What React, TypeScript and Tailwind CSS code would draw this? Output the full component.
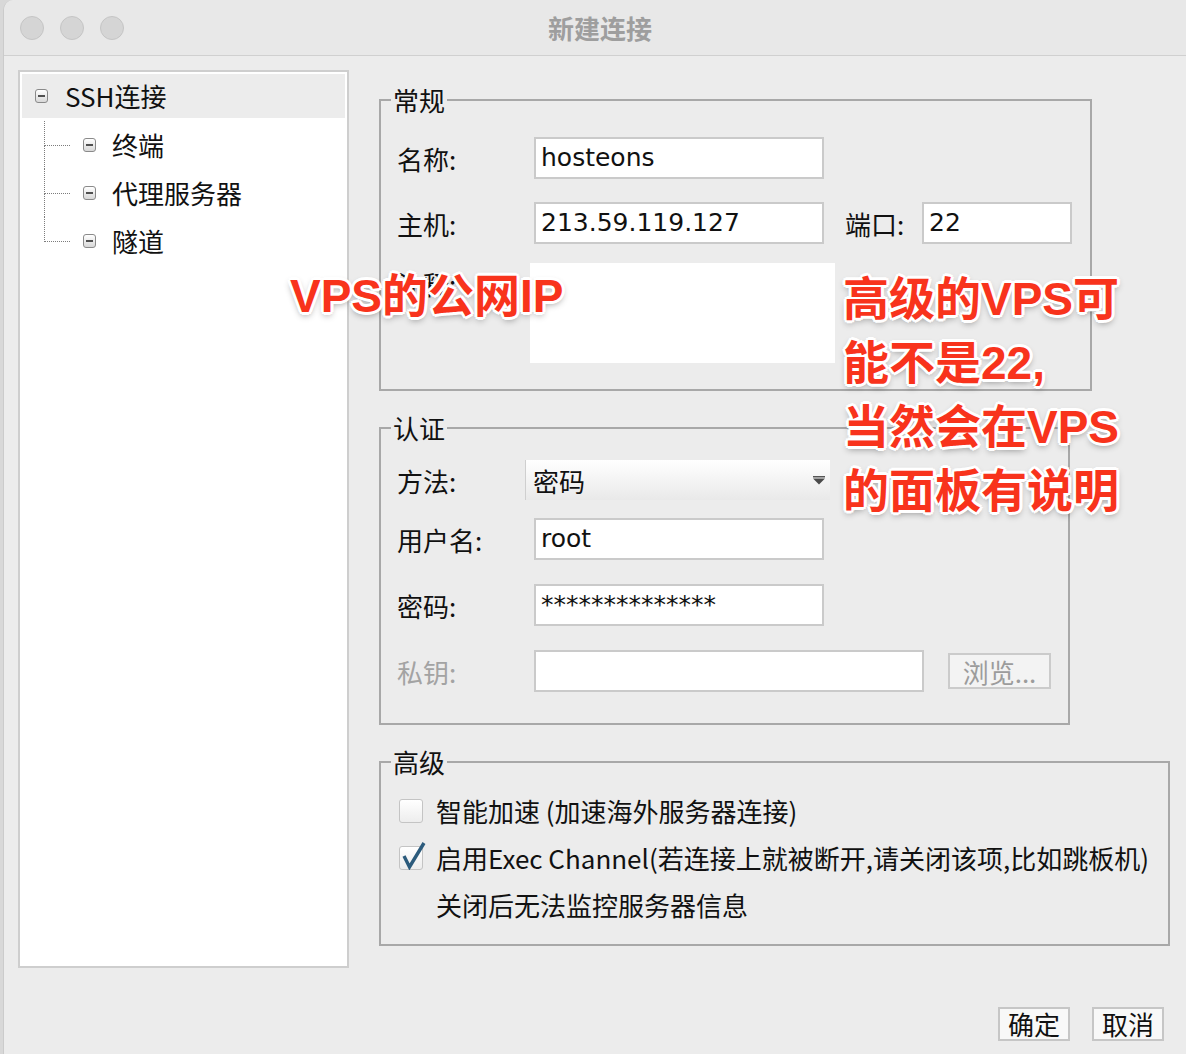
import type { ReactNode } from "react";

function MinusBox() {
  return (
    <div className="w-[13px] h-[14px] rounded-[3px] border-[1.5px] border-[#8a8a8a] bg-gradient-to-b from-white to-[#d8d8d8] flex items-center justify-center shrink-0">
      <div className="w-[7px] h-[1.5px] bg-[#505050]" />
    </div>
  );
}

function TreeChild({ label, last }: { label: string; last?: boolean }) {
  return (
    <div className="h-[48px] flex items-center pl-[22px]">
      <div className="w-[26px] h-full flex flex-col">
        <div className="flex-1 border-l border-b border-dotted border-[#7c7c7c]" />
        <div className={last ? "flex-1" : "flex-1 border-l border-dotted border-[#7c7c7c]"} />
      </div>
      <div className="ml-[13px]">
        <MinusBox />
      </div>
      <span className="ml-[16px] text-[26px] leading-[30px] text-[#111]">{label}</span>
    </div>
  );
}

function TextBox({ value, w }: { value?: string; w: string }) {
  return (
    <div
      className={`${w} h-[42px] bg-white border-2 border-[#cacaca] px-[5px] flex items-center font-['DejaVu_Sans','Noto_Sans_CJK_SC',sans-serif] text-[25px] text-[#111]`}
    >
      {value}
    </div>
  );
}

function Group({ title, w, className, children }: { title: string; w: string; className?: string; children: ReactNode }) {
  return (
    <fieldset className={`${w} border-2 border-[#a8a8a8] pl-[10px] ${className ?? ""}`}>
      <legend className="px-[2px] text-[26px] leading-[30px] text-[#111]">{title}</legend>
      {children}
    </fieldset>
  );
}

function Check({ on }: { on?: boolean }) {
  return (
    <div className="relative w-[24px] h-[24px] ml-[2px] rounded-[3px] border border-[#c4c4c4] bg-gradient-to-b from-white to-[#ededed] shrink-0">
      {on && (
        <svg className="absolute left-[1px] top-[-6px]" width="26" height="29" viewBox="0 0 26 29">
          <path d="M3 15 L8.5 26 L23 2" fill="none" stroke="#2c5b7c" strokeWidth="3.4" strokeLinejoin="miter" />
        </svg>
      )}
    </div>
  );
}

const shadow =
  "[text-shadow:3px_0_#fff,-3px_0_#fff,0_3px_#fff,0_-3px_#fff,2px_2px_#fff,-2px_-2px_#fff,2px_-2px_#fff,-2px_2px_#fff,0_3px_7px_rgba(0,0,0,0.45)]";

export default function App() {
  return (
    <div className="relative w-[1186px] h-[1054px] overflow-hidden bg-[#d8d8d8] font-['Noto_Sans_CJK_SC',sans-serif]">
      <div className="ml-[3px] h-full bg-[#ececec] rounded-tl-[10px] border-l border-[#cbcbcb] flex flex-col">
        {/* title bar */}
        <div className="h-[56px] shrink-0 bg-[#e8e8e8] rounded-tl-[10px] border-b border-[#d0d0d0] flex items-center pl-[16px]">
          <div className="flex gap-[16px]">
            <div className="w-[24px] h-[24px] rounded-full bg-[#d5d5d5] border border-[#c5c5c5]" />
            <div className="w-[24px] h-[24px] rounded-full bg-[#d5d5d5] border border-[#c5c5c5]" />
            <div className="w-[24px] h-[24px] rounded-full bg-[#d5d5d5] border border-[#c5c5c5]" />
          </div>
          <span className="ml-[424px] text-[26px] font-bold text-[#9e9e9e]">新建连接</span>
        </div>

        <div className="flex flex-1 items-start">
          {/* tree */}
          <div className="ml-[14px] mt-[14px] w-[331px] h-[898px] shrink-0 bg-white border-2 border-[#cecece] p-[2px]">
            <div className="h-[44px] bg-[#ececec] flex items-center pl-[13px]">
              <MinusBox />
              <span className="ml-[17px] text-[26px] leading-[30px] text-[#111]">SSH连接</span>
            </div>
            <div className="mt-[3px]">
              <TreeChild label="终端" />
              <TreeChild label="代理服务器" />
              <TreeChild label="隧道" last />
            </div>
          </div>

          {/* form */}
          <div className="ml-[30px] pt-[29px] flex-1 flex flex-col">
            <Group title="常规" w="w-[713px]" className="pt-[22px] pb-[26px]">
              <div className="ml-[6px] flex flex-col">
                <div className="flex items-center">
                  <span className="w-[137px] text-[26px] text-[#111]">名称:</span>
                  <TextBox w="w-[290px]" value="hosteons" />
                </div>
                <div className="mt-[23px] flex items-center">
                  <span className="w-[137px] text-[26px] text-[#111]">主机:</span>
                  <TextBox w="w-[290px]" value="213.59.119.127" />
                  <span className="ml-[21px] w-[77px] text-[26px] text-[#111]">端口:</span>
                  <TextBox w="w-[150px]" value="22" />
                </div>
                <div className="mt-[19px] flex items-start">
                  <span className="w-[133px] mt-[6px] text-[26px] leading-[30px] text-[#111]">注释:</span>
                  <div className="w-[305px] h-[100px] bg-white" />
                </div>
              </div>
            </Group>

            <Group title="认证" w="w-[691px]" className="mt-[22px] pt-[17px] pb-[31px]">
              <div className="ml-[6px] flex flex-col">
                <div className="flex items-center">
                  <span className="w-[128px] text-[26px] text-[#111]">方法:</span>
                  <div className="w-[305px] h-[40px] bg-gradient-to-b from-white to-[#e9e9e9] border-l border-[#cfcfcf] flex items-center pl-[7px] pr-[4px]">
                    <span className="text-[26px] text-[#111]">密码</span>
                    <svg className="ml-auto" width="14" height="9" viewBox="0 0 14 9">
                      <rect x="1" y="0" width="12" height="1.5" fill="#555" />
                      <path d="M1 2.5 L13 2.5 L7 8.5 Z" fill="#4a4a4a" />
                    </svg>
                  </div>
                </div>
                <div className="mt-[18px] flex items-center">
                  <span className="w-[137px] text-[26px] text-[#111]">用户名:</span>
                  <TextBox w="w-[290px]" value="root" />
                </div>
                <div className="mt-[24px] flex items-center">
                  <span className="w-[137px] text-[26px] text-[#111]">密码:</span>
                  <TextBox w="w-[290px]" value="**************" />
                </div>
                <div className="mt-[24px] flex items-center">
                  <span className="w-[137px] text-[26px] text-[#a3a3a3]">私钥:</span>
                  <TextBox w="w-[390px]" />
                  <div className="ml-[24px] w-[103px] h-[36px] bg-[#f3f3f3] border-2 border-[#cbcbcb] flex items-center justify-center text-[26px] text-[#9c9c9c]">
                    浏览...
                  </div>
                </div>
              </div>
            </Group>

            <Group title="高级" w="w-[791px]" className="mt-[22px] pt-[10px] pb-[16px]">
              <div className="ml-[6px] flex flex-col">
                <div className="h-[47px] flex items-center">
                  <Check />
                  <span className="ml-[13px] text-[26px] text-[#111]">智能加速 (加速海外服务器连接)</span>
                </div>
                <div className="h-[47px] flex items-center">
                  <Check on />
                  <span className="ml-[13px] text-[26px] text-[#111] whitespace-nowrap">
                    启用Exec Channel(若连接上就被断开,请关闭该项,比如跳板机)
                  </span>
                </div>
                <div className="h-[47px] flex items-center pl-[39px]">
                  <span className="text-[26px] text-[#111]">关闭后无法监控服务器信息</span>
                </div>
              </div>
            </Group>

            <div className="mt-[61px] w-[785px] flex justify-end gap-[22px]">
              <div className="w-[72px] h-[34px] bg-[#f8f8f8] border-2 border-[#c6c6c6] flex items-center justify-center text-[26px] leading-none text-[#111]">
                确定
              </div>
              <div className="w-[72px] h-[34px] bg-[#f8f8f8] border-2 border-[#c6c6c6] flex items-center justify-center text-[26px] leading-none text-[#111]">
                取消
              </div>
            </div>
          </div>
        </div>
      </div>

      {/* annotations */}
      <div
        className={`absolute left-[290px] top-[264px] text-[46px] leading-[64px] font-bold text-[#f8331c] whitespace-nowrap font-['Liberation_Sans','Noto_Sans_CJK_SC',sans-serif] ${shadow}`}
      >
        VPS的公网IP
      </div>
      <div
        className={`absolute left-[843px] top-[267px] text-[46px] leading-[64px] font-bold text-[#f8331c] whitespace-nowrap font-['Liberation_Sans','Noto_Sans_CJK_SC',sans-serif] ${shadow}`}
      >
        <div>高级的VPS可</div>
        <div>能不是22,</div>
        <div>当然会在VPS</div>
        <div>的面板有说明</div>
      </div>
    </div>
  );
}
